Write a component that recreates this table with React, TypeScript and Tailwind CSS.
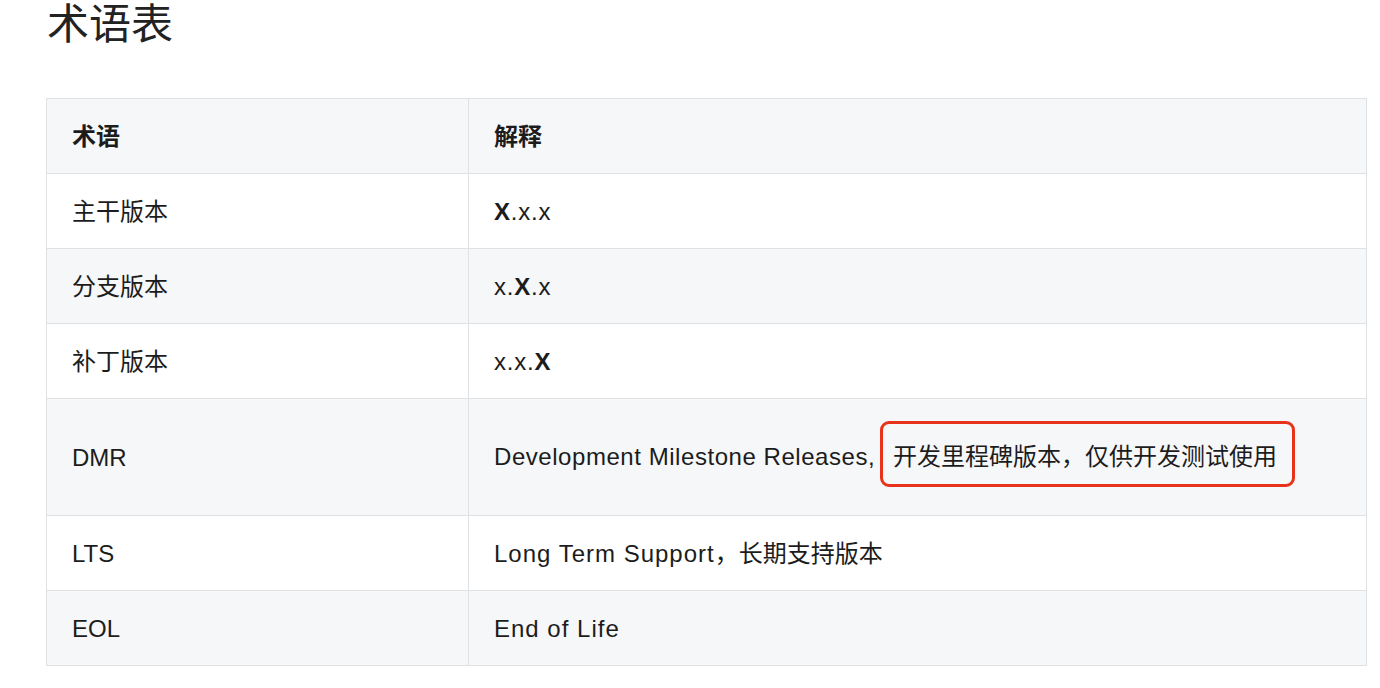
import React from "react";

const font = { fontFamily: '"Liberation Sans", "Noto Sans CJK SC", sans-serif' };

const L = ({ children, t = "tracking-[0.8px]" }: { children: React.ReactNode; t?: string }) => (
  <span className={t}>{children}</span>
);

export default function App() {
  const rows: { term: React.ReactNode; key: string; desc: React.ReactNode }[] = [
    { key: "a", term: "主干版本", desc: (<L><b className="font-semibold">X</b>.x.x</L>) },
    { key: "b", term: "分支版本", desc: (<L>x.<b className="font-semibold">X</b>.x</L>) },
    { key: "c", term: "补丁版本", desc: (<L>x.x.<b className="font-semibold">X</b></L>) },
    {
      key: "DMR",
      term: "DMR",
      desc: (
        <span className="inline-flex items-baseline align-middle">
          <span className="tracking-[0.55px]">Development Milestone Releases</span>
          <span className="w-[12px]">,</span>
          <span className="inline-block border-[3px] border-[#e8321c] rounded-[9px] pl-[10px] pr-[15px] pt-[21px] pb-[15px] leading-[24px]">
            开发里程碑版本，仅供开发测试使用
          </span>
        </span>
      ),
    },
    { key: "LTS", term: "LTS", desc: (<><L t="tracking-[1px]">Long Term Support</L>，长期支持版本</>) },
    { key: "EOL", term: "EOL", desc: <L t="tracking-[1px]">End of Life</L> },
  ];
  return (
    <div className="w-[1380px] h-[688px] bg-white text-[#1c1c1c] overflow-hidden" style={font}>
      <h1 className="text-[42px] leading-[50px] pl-[47px] pt-0 font-normal text-[#222]">术语表</h1>
      <div className="pl-[46px] pt-[48px]">
        <table className="w-[1321px] border-collapse text-[24px] leading-[25px] table-fixed">
          <colgroup>
            <col className="w-[422px]" />
            <col />
          </colgroup>
          <thead>
            <tr className="bg-[#f6f7f9]">
              <th className="border border-[#dfe2e5] h-[75px] px-[25px] text-left font-bold">术语</th>
              <th className="border border-[#dfe2e5] h-[75px] px-[25px] text-left font-bold">解释</th>
            </tr>
          </thead>
          <tbody>
            {rows.map((r, i) => (
              <tr key={r.key} className={i % 2 === 1 ? "bg-[#f6f7f9]" : "bg-white"}>
                <td className={`border border-[#dfe2e5] px-[25px] ${r.key === "DMR" ? "h-[117px]" : "h-[75px]"}`}>{r.term}</td>
                <td className={`border border-[#dfe2e5] px-[25px] ${r.key === "DMR" ? "pb-[6px]" : ""}`}>{r.desc}</td>
              </tr>
            ))}
          </tbody>
        </table>
      </div>
    </div>
  );
}
